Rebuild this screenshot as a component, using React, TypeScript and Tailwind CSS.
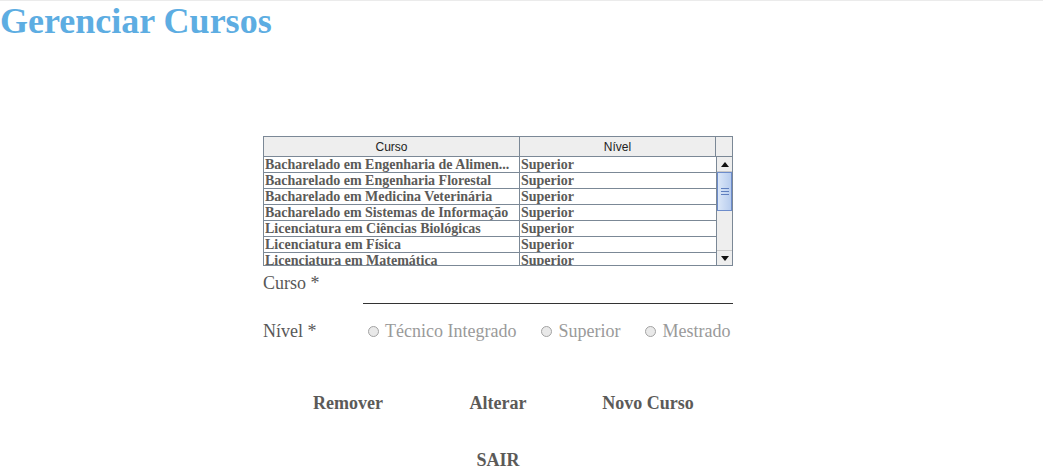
const cursos: [string, string][] = [
  ['Bacharelado em Engenharia de Alimen...', 'Superior'],
  ['Bacharelado em Engenharia Florestal', 'Superior'],
  ['Bacharelado em Medicina Veterinária', 'Superior'],
  ['Bacharelado em Sistemas de Informação', 'Superior'],
  ['Licenciatura em Ciências Biológicas', 'Superior'],
  ['Licenciatura em Física', 'Superior'],
  ['Licenciatura em Matemática', 'Superior'],
]

function Radio({ label }: { label: string }) {
  return (
    <label className="flex items-center">
      <span className="w-[11px] h-[11px] rounded-full border border-[#a3a3a3] bg-[#e9e9e9]" />
      <span className="ml-[6px] text-[#9a9a9a]">{label}</span>
    </label>
  )
}

function ScrollBar() {
  return (
    <div className="w-[16px] h-[108px] bg-[#eeeeee] border-l border-[#7b8896] flex flex-col">
      <div className="h-[15px] flex items-center justify-center border-b border-[#c9c9c9]">
        <svg width="8" height="5" viewBox="0 0 8 5">
          <path d="M0 5 L4 0 L8 5 Z" fill="#111" />
        </svg>
      </div>
      <div className="h-[39px] border border-[#6d8ccb] bg-gradient-to-r from-[#dbe7f8] to-[#b8cdee] flex flex-col items-center justify-center gap-[2px]">
        <span className="w-[8px] h-px bg-[#5f7fbf]" />
        <span className="w-[8px] h-px bg-[#5f7fbf]" />
        <span className="w-[8px] h-px bg-[#5f7fbf]" />
      </div>
      <div className="flex-1" />
      <div className="h-[15px] flex items-center justify-center border-t border-[#c9c9c9]">
        <svg width="8" height="5" viewBox="0 0 8 5">
          <path d="M0 0 L4 5 L8 0 Z" fill="#111" />
        </svg>
      </div>
    </div>
  )
}

export default function App() {
  return (
    <div className="w-[1043px] h-[476px] bg-white border-t border-[#ebebeb] font-['Liberation_Serif',serif] overflow-hidden">
      <h1 className="text-[36px] leading-[40px] font-bold text-[#5dade2]">Gerenciar Cursos</h1>

      <div className="ml-[263px] mt-[95px] w-[470px]">
        <div className="border border-[#7b8896]">
          <div className="flex h-[20px] bg-[#eeeeee] border-b border-[#7b8896] font-['Liberation_Sans',sans-serif] text-[12px] text-[#222]">
            <div className="w-[256px] border-r border-[#7b8896] flex items-center justify-center">Curso</div>
            <div className="w-[196px] border-r border-[#7b8896] flex items-center justify-center">Nível</div>
            <div className="flex-1" />
          </div>
          <div className="flex">
            <div className="w-[452px] h-[108px] overflow-hidden">
              {cursos.map(([c, n]) => (
                <div key={c} className="flex h-[16px] border-b border-[#7b8896] text-[14px] leading-[15px] font-bold text-[#5b5a58]">
                  <div className="w-[256px] pl-[1px] border-r border-[#7b8896] whitespace-nowrap overflow-hidden">{c}</div>
                  <div className="flex-1 pl-[1px]">{n}</div>
                </div>
              ))}
            </div>
            <ScrollBar />
          </div>
        </div>

        <div className="flex items-start mt-[7px] text-[18px] text-[#585858]">
          <span className="w-[100px] leading-[21px]">Curso *</span>
          <div className="flex-1 h-[31px] border-b border-[#333]" />
        </div>

        <div className="flex items-center mt-[17px] text-[18px] leading-[21px] text-[#585858]">
          <span className="w-[100px]">Nível *</span>
          <div className="flex items-center gap-[25px] ml-[5px]">
            <Radio label="Técnico Integrado" />
            <Radio label="Superior" />
            <Radio label="Mestrado" />
          </div>
        </div>

        <div className="flex justify-center mt-[51px] text-[18px] leading-[21px] font-bold text-[#5b5a58]">
          <button className="w-[150px] text-center">Remover</button>
          <button className="w-[150px] text-center">Alterar</button>
          <button className="w-[150px] text-center">Novo Curso</button>
        </div>

        <div className="flex justify-center mt-[36px] text-[18px] leading-[21px] font-bold text-[#5b5a58]">
          <button className="w-[150px] text-center">SAIR</button>
        </div>
      </div>
    </div>
  )
}
